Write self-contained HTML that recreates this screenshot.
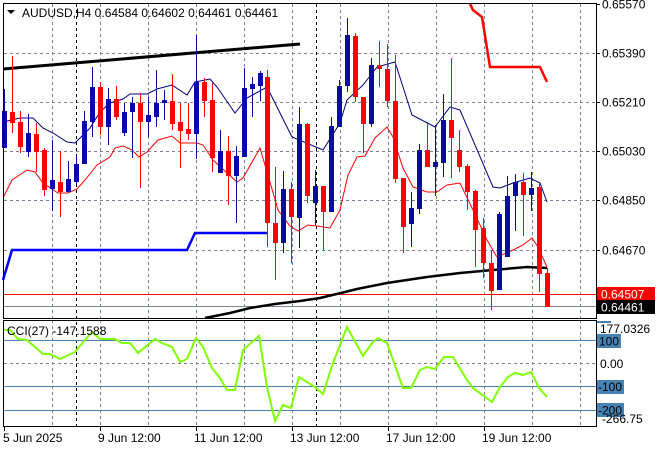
<!DOCTYPE html>
<html><head><meta charset="utf-8"><style>
html,body{margin:0;padding:0;background:#fff;}
svg{display:block;font-family:"Liberation Sans","DejaVu Sans",sans-serif;}
</style></head><body>
<svg width="660" height="450" viewBox="0 0 660 450" xmlns="http://www.w3.org/2000/svg">
<rect width="660" height="450" fill="#fff"/>
<g stroke="#7a8494" stroke-width="1" stroke-dasharray="3,3" fill="none">
<line x1="4" y1="53.5" x2="596" y2="53.5"/><line x1="4" y1="102.5" x2="596" y2="102.5"/><line x1="4" y1="151.5" x2="596" y2="151.5"/><line x1="4" y1="200.5" x2="596" y2="200.5"/><line x1="4" y1="250.5" x2="596" y2="250.5"/>
<line x1="52.5" y1="4" x2="52.5" y2="318"/><line x1="100.5" y1="4" x2="100.5" y2="318"/><line x1="148.5" y1="4" x2="148.5" y2="318"/><line x1="196.5" y1="4" x2="196.5" y2="318"/><line x1="244.5" y1="4" x2="244.5" y2="318"/><line x1="292.5" y1="4" x2="292.5" y2="318"/><line x1="340.5" y1="4" x2="340.5" y2="318"/><line x1="388.5" y1="4" x2="388.5" y2="318"/><line x1="436.5" y1="4" x2="436.5" y2="318"/><line x1="484.5" y1="4" x2="484.5" y2="318"/><line x1="532.5" y1="4" x2="532.5" y2="318"/><line x1="580.5" y1="4" x2="580.5" y2="318"/>
<line x1="52.5" y1="320" x2="52.5" y2="426"/><line x1="100.5" y1="320" x2="100.5" y2="426"/><line x1="148.5" y1="320" x2="148.5" y2="426"/><line x1="196.5" y1="320" x2="196.5" y2="426"/><line x1="244.5" y1="320" x2="244.5" y2="426"/><line x1="292.5" y1="320" x2="292.5" y2="426"/><line x1="340.5" y1="320" x2="340.5" y2="426"/><line x1="388.5" y1="320" x2="388.5" y2="426"/><line x1="436.5" y1="320" x2="436.5" y2="426"/><line x1="484.5" y1="320" x2="484.5" y2="426"/><line x1="532.5" y1="320" x2="532.5" y2="426"/><line x1="580.5" y1="320" x2="580.5" y2="426"/>
<line x1="4" y1="363.5" x2="596" y2="363.5"/>
</g>
<g stroke="#000" stroke-width="1" stroke-dasharray="3,3"><line x1="76.5" y1="4" x2="76.5" y2="426"/><line x1="316.5" y1="4" x2="316.5" y2="426"/></g>
<line x1="4" y1="294.5" x2="596" y2="294.5" stroke="#ff0000"/>
<line x1="4" y1="306.5" x2="596" y2="306.5" stroke="#7a8494"/>
<polyline fill="none" stroke="#000" stroke-width="3" points="3,69 300,44"/>
<polyline fill="none" stroke="#000" stroke-width="2.5" points="205,318 230,313 250,308 275,304 300,301 320,298 345,292 357,289 387,283 427,277 460,273 493,270 527,267 547,268"/>
<polyline fill="none" stroke="#0000ff" stroke-width="2.5" points="3,280 12,250 187,250 195,233 267,233"/>
<polyline fill="none" stroke="#ff0000" stroke-width="2.5" points="470,4 473,10 482,17 490,67 540,67 547,82"/>
<polyline fill="none" stroke="#000080" stroke-width="1" points="3,122 20,118 33,118 43,128 53,133 67,142 75,143 83,135 90,128 100,112 110,103 123,99 130,94 147,94 157,89 172,85 187,95 195,82 210,79 217,87 235,113 247,98 267,87 280,113 292,137 323,150 340,123 347,100 363,85 377,67 395,62 412,115 435,127 450,107 460,110 493,187 500,188 513,183 530,178 540,183 547,202"/>
<polyline fill="none" stroke="#ff0000" stroke-width="1" points="3,198 12,180 27,170 35,172 43,183 58,193 68,193 77,189 85,180 97,165 110,157 115,148 123,146 132,150 139,157 147,152 158,140 172,136 180,143 197,143 203,145 213,160 227,173 237,182 243,178 260,148 270,182 278,210 290,226 298,231 308,225 317,226 330,228 340,210 348,175 357,157 365,156 375,138 387,127 393,137 403,168 413,187 427,192 437,192 447,185 460,183 473,210 487,240 497,257 513,250 523,245 532,238 538,247 547,267"/>
<g fill="#0a0aa8" stroke="#0a0aa8">
<line x1="4.5" y1="89" x2="4.5" y2="148"/><rect x="2.5" y="111.5" width="4" height="36"/>
<line x1="28.5" y1="114" x2="28.5" y2="157"/><rect x="26.5" y="133.5" width="4" height="18"/>
<line x1="52.5" y1="140" x2="52.5" y2="211"/><rect x="50.5" y="180.5" width="4" height="8"/>
<line x1="68.5" y1="161" x2="68.5" y2="192"/><rect x="66.5" y="179.5" width="4" height="12"/>
<line x1="76.5" y1="156" x2="76.5" y2="185"/><rect x="74.5" y="164.5" width="4" height="17"/>
<line x1="84.5" y1="111" x2="84.5" y2="164"/><rect x="82.5" y="121.5" width="4" height="42"/>
<line x1="92.5" y1="67" x2="92.5" y2="137"/><rect x="90.5" y="87.5" width="4" height="34"/>
<line x1="108.5" y1="88" x2="108.5" y2="145"/><rect x="106.5" y="99.5" width="4" height="27"/>
<line x1="124.5" y1="103" x2="124.5" y2="136"/><rect x="122.5" y="112.5" width="4" height="20"/>
<line x1="132.5" y1="97" x2="132.5" y2="158"/><rect x="130.5" y="103.5" width="4" height="8"/>
<line x1="148.5" y1="97" x2="148.5" y2="137"/><rect x="146.5" y="115.5" width="4" height="6"/>
<line x1="156.5" y1="70" x2="156.5" y2="127"/><rect x="154.5" y="103.5" width="4" height="13"/>
<line x1="164.5" y1="90" x2="164.5" y2="120"/><rect x="162.5" y="100.5" width="4" height="2"/>
<line x1="196.5" y1="35" x2="196.5" y2="159"/><rect x="194.5" y="82.5" width="4" height="51"/>
<line x1="220.5" y1="130" x2="220.5" y2="173"/><rect x="218.5" y="151.5" width="4" height="21"/>
<line x1="236.5" y1="146" x2="236.5" y2="223"/><rect x="234.5" y="156.5" width="4" height="19"/>
<line x1="244.5" y1="68" x2="244.5" y2="157"/><rect x="242.5" y="88.5" width="4" height="68"/>
<line x1="252.5" y1="77" x2="252.5" y2="117"/><rect x="250.5" y="84.5" width="4" height="4"/>
<line x1="260.5" y1="71" x2="260.5" y2="101"/><rect x="258.5" y="73.5" width="4" height="12"/>
<line x1="283.5" y1="171" x2="283.5" y2="253"/><rect x="281.5" y="189.5" width="4" height="53"/>
<line x1="299.5" y1="107" x2="299.5" y2="248"/><rect x="297.5" y="124.5" width="4" height="93"/>
<line x1="315.5" y1="170" x2="315.5" y2="225"/><rect x="313.5" y="186.5" width="4" height="16"/>
<line x1="331.5" y1="117" x2="331.5" y2="212"/><rect x="329.5" y="126.5" width="4" height="85"/>
<line x1="339.5" y1="80" x2="339.5" y2="127"/><rect x="337.5" y="86.5" width="4" height="40"/>
<line x1="347.5" y1="18" x2="347.5" y2="92"/><rect x="345.5" y="35.5" width="4" height="50"/>
<line x1="371.5" y1="58" x2="371.5" y2="127"/><rect x="369.5" y="65.5" width="4" height="58"/>
<line x1="411.5" y1="192" x2="411.5" y2="247"/><rect x="409.5" y="208.5" width="4" height="15"/>
<line x1="419.5" y1="144" x2="419.5" y2="214"/><rect x="417.5" y="150.5" width="4" height="58"/>
<line x1="435.5" y1="125" x2="435.5" y2="196"/><rect x="433.5" y="162.5" width="4" height="4"/>
<line x1="443.5" y1="94" x2="443.5" y2="177"/><rect x="441.5" y="120.5" width="4" height="42"/>
<line x1="499.5" y1="212" x2="499.5" y2="290"/><rect x="497.5" y="214.5" width="4" height="75"/>
<line x1="507.5" y1="176" x2="507.5" y2="257"/><rect x="505.5" y="196.5" width="4" height="60"/>
<line x1="515.5" y1="174" x2="515.5" y2="231"/><rect x="513.5" y="182.5" width="4" height="13"/>
<line x1="531.5" y1="172" x2="531.5" y2="211"/><rect x="529.5" y="188.5" width="4" height="6"/>
</g>
<g fill="#ff0000" stroke="#ff0000">
<line x1="12.5" y1="56" x2="12.5" y2="133"/><rect x="10.5" y="112.5" width="4" height="10"/>
<line x1="20.5" y1="111" x2="20.5" y2="153"/><rect x="18.5" y="122.5" width="4" height="24"/>
<line x1="36.5" y1="123" x2="36.5" y2="172"/><rect x="34.5" y="134.5" width="4" height="17"/>
<line x1="44.5" y1="148" x2="44.5" y2="196"/><rect x="42.5" y="150.5" width="4" height="39"/>
<line x1="60.5" y1="151" x2="60.5" y2="217"/><rect x="58.5" y="182.5" width="4" height="9"/>
<line x1="100.5" y1="82" x2="100.5" y2="135"/><rect x="98.5" y="87.5" width="4" height="39"/>
<line x1="116.5" y1="86" x2="116.5" y2="120"/><rect x="114.5" y="99.5" width="4" height="17"/>
<line x1="140.5" y1="93" x2="140.5" y2="188"/><rect x="138.5" y="103.5" width="4" height="18"/>
<line x1="172.5" y1="74" x2="172.5" y2="130"/><rect x="170.5" y="101.5" width="4" height="22"/>
<line x1="180.5" y1="103" x2="180.5" y2="168"/><rect x="178.5" y="122.5" width="4" height="8"/>
<line x1="188.5" y1="103" x2="188.5" y2="140"/><rect x="186.5" y="129.5" width="4" height="4"/>
<line x1="204.5" y1="78" x2="204.5" y2="117"/><rect x="202.5" y="82.5" width="4" height="18"/>
<line x1="212.5" y1="83" x2="212.5" y2="172"/><rect x="210.5" y="100.5" width="4" height="57"/>
<line x1="228.5" y1="136" x2="228.5" y2="205"/><rect x="226.5" y="151.5" width="4" height="24"/>
<line x1="267.5" y1="70" x2="267.5" y2="247"/><rect x="265.5" y="77.5" width="4" height="145"/>
<line x1="275.5" y1="167" x2="275.5" y2="280"/><rect x="273.5" y="223.5" width="4" height="19"/>
<line x1="291.5" y1="182" x2="291.5" y2="263"/><rect x="289.5" y="189.5" width="4" height="27"/>
<line x1="307.5" y1="123" x2="307.5" y2="203"/><rect x="305.5" y="124.5" width="4" height="71"/>
<line x1="323.5" y1="186" x2="323.5" y2="250"/><rect x="321.5" y="186.5" width="4" height="25"/>
<line x1="355.5" y1="33" x2="355.5" y2="102"/><rect x="353.5" y="36.5" width="4" height="60"/>
<line x1="363.5" y1="97" x2="363.5" y2="153"/><rect x="361.5" y="97.5" width="4" height="26"/>
<line x1="379.5" y1="41" x2="379.5" y2="87"/><rect x="377.5" y="65.5" width="4" height="3"/>
<line x1="387.5" y1="44" x2="387.5" y2="107"/><rect x="385.5" y="69.5" width="4" height="31"/>
<line x1="395.5" y1="55" x2="395.5" y2="183"/><rect x="393.5" y="101.5" width="4" height="77"/>
<line x1="403.5" y1="178" x2="403.5" y2="253"/><rect x="401.5" y="178.5" width="4" height="48"/>
<line x1="427.5" y1="122" x2="427.5" y2="167"/><rect x="425.5" y="150.5" width="4" height="16"/>
<line x1="451.5" y1="58" x2="451.5" y2="178"/><rect x="449.5" y="120.5" width="4" height="17"/>
<line x1="459.5" y1="130" x2="459.5" y2="172"/><rect x="457.5" y="150.5" width="4" height="16"/>
<line x1="467.5" y1="164" x2="467.5" y2="210"/><rect x="465.5" y="166.5" width="4" height="25"/>
<line x1="475.5" y1="190" x2="475.5" y2="267"/><rect x="473.5" y="191.5" width="4" height="38"/>
<line x1="483.5" y1="218" x2="483.5" y2="278"/><rect x="481.5" y="228.5" width="4" height="34"/>
<line x1="491.5" y1="250" x2="491.5" y2="310"/><rect x="489.5" y="263.5" width="4" height="27"/>
<line x1="523.5" y1="173" x2="523.5" y2="236"/><rect x="521.5" y="182.5" width="4" height="12"/>
<line x1="539.5" y1="183" x2="539.5" y2="292"/><rect x="537.5" y="187.5" width="4" height="86"/>
<line x1="547.5" y1="268" x2="547.5" y2="307"/><rect x="545.5" y="273.5" width="4" height="33"/>
</g>
<g stroke="#4682b4" stroke-width="1"><line x1="4" y1="340.5" x2="596" y2="340.5"/><line x1="4" y1="386.5" x2="596" y2="386.5"/><line x1="4" y1="410.5" x2="596" y2="410.5"/></g>
<polyline fill="none" stroke="#7fff00" stroke-width="2" points="3,330 10,330 18,339 27,340 43,354 50,354 60,359 75,352 85,340 92,332 100,339 115,339 122,343 130,343 138,353 155,339 162,343 172,347 180,362 187,359 196,338 203,347 212,368 220,378 227,390 235,390 243,350 259,336 267,387 275,421 283,405 291,408 299,377 315,387 323,394 333,363 347,327 363,356 372,343 378,338 387,343 403,388 411,388 420,370 427,367 435,369 444,357 453,357 467,380 473,388 492,402 500,387 508,377 515,373 523,375 531,372 539,388 547,397"/>
<rect x="3.5" y="3.5" width="593" height="315" fill="none" stroke="#000"/>
<rect x="3.5" y="320.5" width="593" height="106" fill="none" stroke="#000"/>
<g stroke="#000"><line x1="597" y1="4.5" x2="600" y2="4.5"/><line x1="597" y1="53.5" x2="600" y2="53.5"/><line x1="597" y1="102.5" x2="600" y2="102.5"/><line x1="597" y1="151.5" x2="600" y2="151.5"/><line x1="597" y1="200.5" x2="600" y2="200.5"/><line x1="597" y1="250.5" x2="600" y2="250.5"/>
<line x1="4.5" y1="427" x2="4.5" y2="431"/><line x1="100.5" y1="427" x2="100.5" y2="431"/><line x1="196.5" y1="427" x2="196.5" y2="431"/><line x1="292.5" y1="427" x2="292.5" y2="431"/><line x1="388.5" y1="427" x2="388.5" y2="431"/><line x1="484.5" y1="427" x2="484.5" y2="431"/></g>
<polygon points="7,10 15,10 11,14" fill="#000"/>
<text x="22" y="17" font-size="12" fill="#000">AUDUSD,H4  0.64584 0.64602 0.64461 0.64461</text>
<text x="7" y="335" font-size="12" fill="#000">CCI(27) -147.1588</text>
<g font-size="12" fill="#000">
<text x="602" y="8.5">0.65570</text><text x="602" y="57.5">0.65390</text><text x="602" y="106.5">0.65210</text><text x="602" y="155.5">0.65030</text><text x="602" y="204.5">0.64850</text><text x="602" y="254.5">0.64670</text>
</g>
<rect x="597" y="287" width="58" height="14" fill="#ff0000"/><text x="601" y="298.5" font-size="12" fill="#fff">0.64507</text>
<rect x="597" y="300" width="58" height="14" fill="#000"/><text x="601" y="311.5" font-size="12" fill="#fff">0.64461</text>
<rect x="597" y="321" width="14" height="2" fill="#4682b4"/>
<rect x="597" y="334" width="24" height="14" fill="#4682b4"/>
<rect x="597" y="380" width="27" height="14" fill="#4682b4"/>
<rect x="597" y="403" width="27" height="14" fill="#4682b4"/>
<g font-size="12" fill="#000">
<text x="600" y="333">177.0326</text><text x="599" y="345.5">100</text><text x="600" y="368">0.00</text><text x="598" y="391">-100</text><text x="598" y="414.5">-200</text><text x="602" y="423">-266.75</text>
</g>
<g font-size="12" fill="#000">
<text x="3" y="442">5 Jun 2025</text><text x="98" y="442">9 Jun 12:00</text><text x="194" y="442">11 Jun 12:00</text><text x="290" y="442">13 Jun 12:00</text><text x="386" y="442">17 Jun 12:00</text><text x="482" y="442">19 Jun 12:00</text>
</g>
</svg>
</body></html>
